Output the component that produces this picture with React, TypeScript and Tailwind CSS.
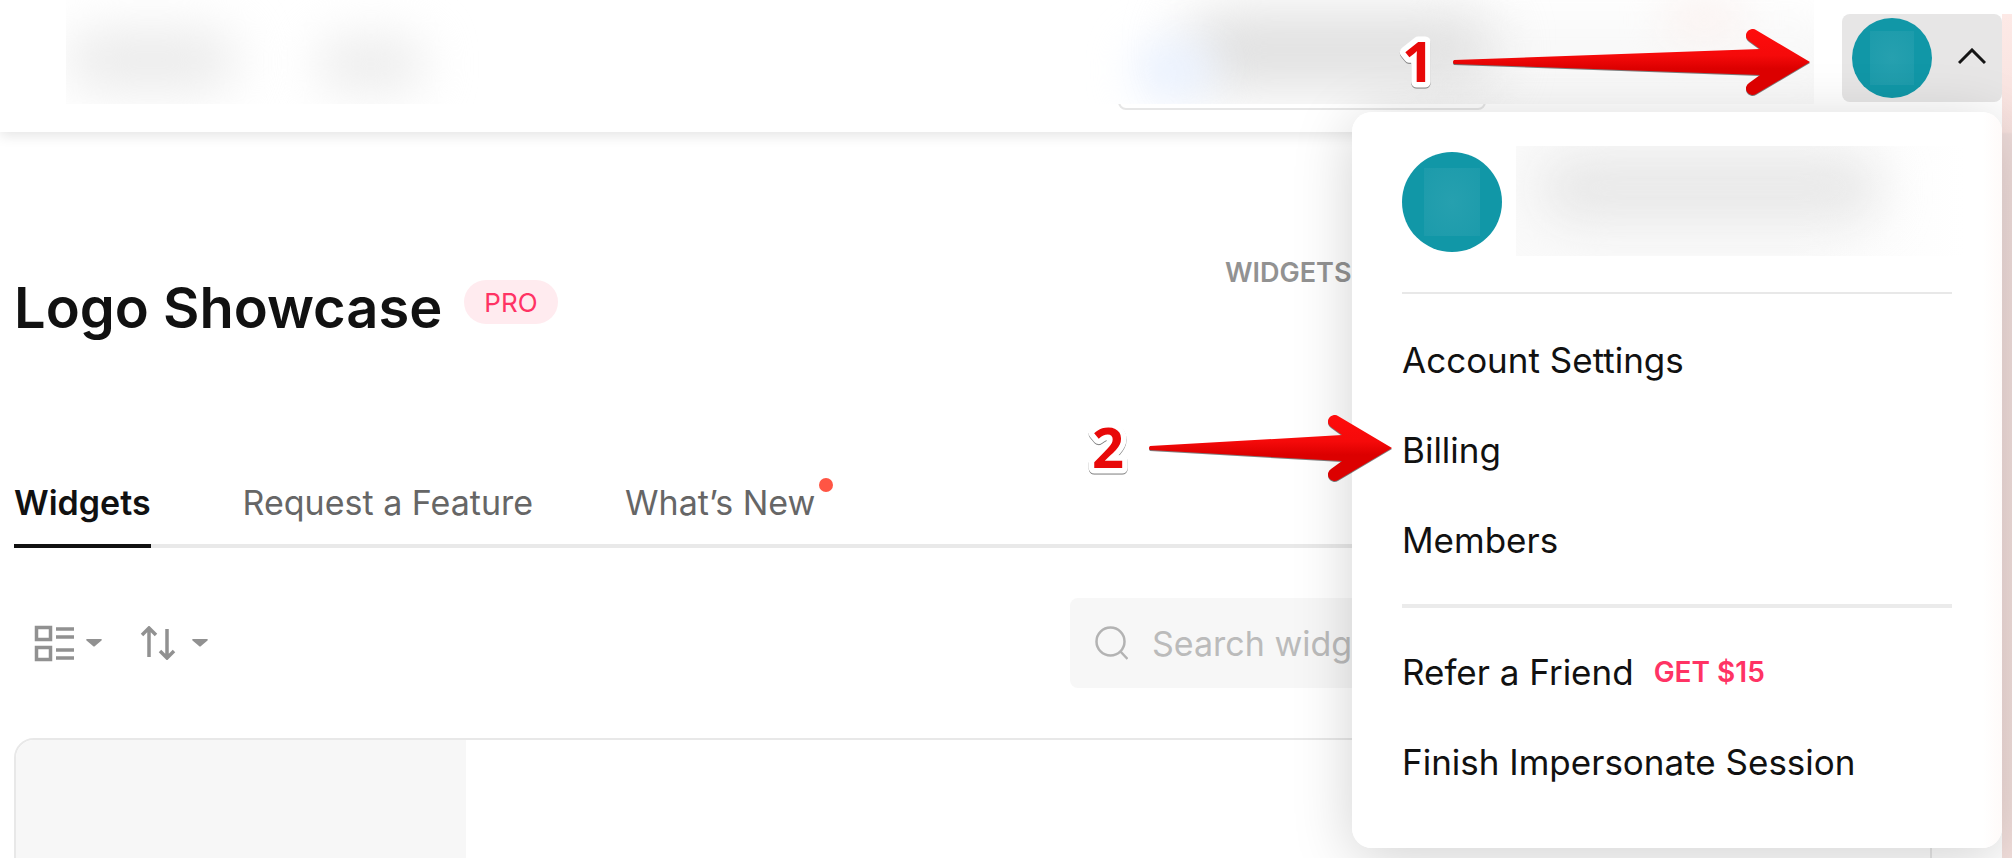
import { useId } from 'react'

function Arrow({ length }: { length: number }) {
  const id = useId()
  const l = length
  return (
    <svg width={l + 4} height="72" viewBox={`0 0 ${l + 4} 72`} aria-hidden="true">
      <defs>
        <linearGradient id={id} x1="0" y1="0" x2="0" y2="1">
          <stop offset="0" stopColor="#ff0c0c" />
          <stop offset="0.4" stopColor="#f50a0a" />
          <stop offset="0.6" stopColor="#dc0000" />
          <stop offset="1" stopColor="#dc0000" />
        </linearGradient>
      </defs>
      {[1, 0].map((dy) => (
        <path
          key={dy}
          transform={`translate(0 ${dy})`}
          fill={dy ? '#00000080' : `url(#${id})`}
          d={`M2 31 L${l - 50} 20 L${l - 61} 12 A6.5 6.5 0 0 1 ${l - 54} 1 L${l} 33 L${l - 54} 65 A6.5 6.5 0 0 1 ${l - 61} 54 L${l - 50} 46 L2 35 Q0 33 2 31 Z`}
        />
      ))}
    </svg>
  )
}

function Digit({ children }: { children: string }) {
  return (
    <svg width="60" height="100" viewBox="-6 -14 60 100" className="font-['Open_Sans',sans-serif] text-[56px] font-bold">
      <text x="8" y="53" stroke="#777" strokeWidth="11" strokeLinejoin="round" fill="#777" aria-hidden="true">{children}</text>
      <text x="8" y="52" stroke="#fff" strokeWidth="11" strokeLinejoin="round" fill="#fff" aria-hidden="true">{children}</text>
      <text x="8" y="52" fill="#e80909">{children}</text>
    </svg>
  )
}

function Caret() {
  return (
    <svg width="16" height="8" viewBox="0 0 16 8" fill="#919191" aria-hidden="true">
      <path d="M1 0h14c1 0 1 1 .5 1.500L9 7q-1 1-2 0L.5 1.500C0 1 0 0 1 0z" />
    </svg>
  )
}

function Avatar({ className }: { className: string }) {
  return (
    <span className={`flex shrink-0 items-center justify-center rounded-full bg-[#1197a7] ${className}`}>
      <span className="h-[68%] w-[56%] bg-[radial-gradient(#26a0af,#1c9bab)]" />
    </span>
  )
}

function MenuItem({ children }: { children: React.ReactNode }) {
  return (
    <a href="#" className="flex h-[90px] items-center gap-5 whitespace-nowrap">
      {children}
    </a>
  )
}

function AccountMenu() {
  return (
    <nav
      aria-label="Account"
      className="absolute top-[112px] right-[10px] z-20 w-[650px] rounded-[20px] bg-[linear-gradient(to_right,#fff_97%,#fefaf9)] px-[50px] pt-10 pb-[41px] text-[35px] shadow-[0_10px_60px_rgba(0,0,0,0.18)]"
    >
      <div className="flex h-[140px] items-start gap-[14px]">
        <Avatar className="size-[100px]" />
        <div className="-mt-[6px] -mr-3 h-[110px] flex-1 overflow-hidden bg-[linear-gradient(to_right,#fafafa_60%,#fff)]">
          <div className="mt-2 ml-6 h-[68px] w-[340px] rounded-full bg-[#e8e8e8] blur-[24px]" />
        </div>
      </div>
      <hr className="border-0 border-t-2 border-[#e8e8e8]" />
      <div className="pt-[21px] pb-[19px]">
        <MenuItem>Account Settings</MenuItem>
        <MenuItem>Billing</MenuItem>
        <MenuItem>Members</MenuItem>
      </div>
      <hr className="border-0 border-t-4 border-[#ebebeb]" />
      <div className="pt-[19px]">
        <MenuItem>
          Refer a Friend
          <span className="text-[28px] font-semibold text-[#ff3364]">GET $15</span>
        </MenuItem>
        <MenuItem>Finish Impersonate Session</MenuItem>
      </div>
    </nav>
  )
}

export default function App() {
  return (
    <div className="relative h-screen overflow-hidden bg-white font-['Inter',sans-serif] text-[#111]">
      <header className="relative flex h-[132px] items-start justify-end pt-[14px] pr-[10px] shadow-[0_4px_12px_rgba(0,0,0,0.1)]">
        <div className="absolute top-0 left-[66px] h-[104px] w-[480px] overflow-hidden">
          <div className="absolute top-8 left-0 h-14 w-[170px] rounded-full bg-[#e9e9e9] blur-[26px]" />
          <div className="absolute top-9 left-[250px] h-14 w-[110px] rounded-full bg-[#ededed] blur-[24px]" />
        </div>
        <div className="absolute top-[60px] right-[526px] h-[50px] w-[368px] rounded-lg border-2 border-[#e6e6e6]" />
        <div className="absolute top-0 right-[198px] h-[104px] w-[780px] overflow-hidden bg-white">
          <div className="absolute top-5 left-[400px] h-24 w-[440px] rounded-full bg-[#f8f8f8] blur-[24px]" />
          <div className="absolute top-3 left-[150px] h-[76px] w-[310px] rounded-full bg-[#dfdfdf] blur-[28px]" />
          <div className="absolute top-[42px] left-[100px] h-14 w-20 rounded-full bg-[#e9f1ff] blur-[22px]" />
          <div className="absolute top-0 left-[630px] h-10 w-20 rounded-full bg-[#fbf2f0] blur-[20px]" />
        </div>
        <button
          aria-label="Account menu"
          className="relative flex h-[88px] w-40 items-center justify-between rounded-lg bg-[#e7e6e6] pr-4 pl-[10px]"
        >
          <Avatar className="size-20" />
          <svg width="28" height="20" viewBox="0 0 28 20" fill="none" stroke="#151515" strokeWidth="3" aria-hidden="true">
            <path d="M1 15 14 2l13 13" />
          </svg>
        </button>
      </header>

      <main className="pr-20 pl-[14px]">
        <div className="flex h-[312px] items-start justify-between pt-[124px]">
          <div className="flex items-start gap-[22px] pt-[17px]">
            <h1 className="text-[56px] leading-[70px] font-semibold">Logo Showcase</h1>
            <span className="mt-[7px] flex h-11 items-center rounded-full bg-[#ffebef] px-5 text-[26px] text-[#ff3364]">PRO</span>
          </div>
          <div className="w-[707px] text-[27px] leading-[34px] font-semibold text-[#929292]">WIDGETS</div>
        </div>

        <nav aria-label="Sections" className="flex h-[104px] gap-[92px] border-b-4 border-[#e9e9e9] pt-[34px] text-[34px] leading-[50px] text-[#666]">
          <a href="#" className="h-[70px] border-b-4 border-[#111] font-semibold text-[#111]">Widgets</a>
          <a href="#">Request a Feature</a>
          <a href="#" className="flex gap-1">
            What’s New
            <span className="size-[14px] rounded-full bg-[#ff5544]" />
          </a>
        </nav>

        <div className="flex h-[190px] items-start justify-between pt-[50px]">
          <div className="flex h-[90px] items-center gap-[38px] pl-5">
            <button aria-label="View" className="flex items-center gap-[10px]">
              <svg width="42" height="38" viewBox="0 0 42 38" fill="none" stroke="#919191" strokeWidth="3.500" aria-hidden="true">
                <path d="M2.500 3.500h14v12h-14zM2.500 23.500h14v12h-14zM22 5h18M22 13h18M22 26h18M22 34h18" />
              </svg>
              <Caret />
            </button>
            <button aria-label="Sort" className="flex items-center gap-4">
              <svg width="36" height="34" viewBox="0 0 36 34" fill="none" stroke="#919191" strokeWidth="3.500" aria-hidden="true">
                <path d="M9 31V3M2 9l7-7 7 7M27 3v28M20 25l7 7 7-7" />
              </svg>
              <Caret />
            </button>
          </div>
          <label className="flex h-[90px] w-[862px] items-center gap-6 rounded-lg bg-[#f7f7f7] px-6">
            <svg width="34" height="34" viewBox="0 0 34 34" fill="none" stroke="#b3b3b3" strokeWidth="2.500" aria-hidden="true">
              <circle cx="16.500" cy="15.500" r="14" />
              <path d="m26 25 7.500 8" />
            </svg>
            <input
              type="search"
              aria-label="Search widgets"
              placeholder="Search widgets"
              className="flex-1 bg-transparent text-[34px] outline-none placeholder:text-[#bbb]"
            />
          </label>
        </div>

        <section className="h-[300px] overflow-hidden rounded-[20px] border-2 border-[#e8e8e8]">
          <div className="h-full w-[450px] bg-[#f7f7f7]" />
        </section>
      </main>

      <div className="absolute top-[14px] right-0 bottom-0 w-[10px] bg-[linear-gradient(#fde9e6_0,#f8e2df_118px,#f0dddb_120px,#f3dfdc)]" />
      <AccountMenu />

      <div className="absolute top-[29px] right-[198px] z-30"><Arrow length={358} /></div>
      <div className="absolute top-[415px] right-[616px] z-30"><Arrow length={244} /></div>
      <div className="absolute top-[16px] right-[564px] z-30"><Digit>1</Digit></div>
      <div className="absolute top-[402px] right-[874px] z-30"><Digit>2</Digit></div>
    </div>
  )
}
